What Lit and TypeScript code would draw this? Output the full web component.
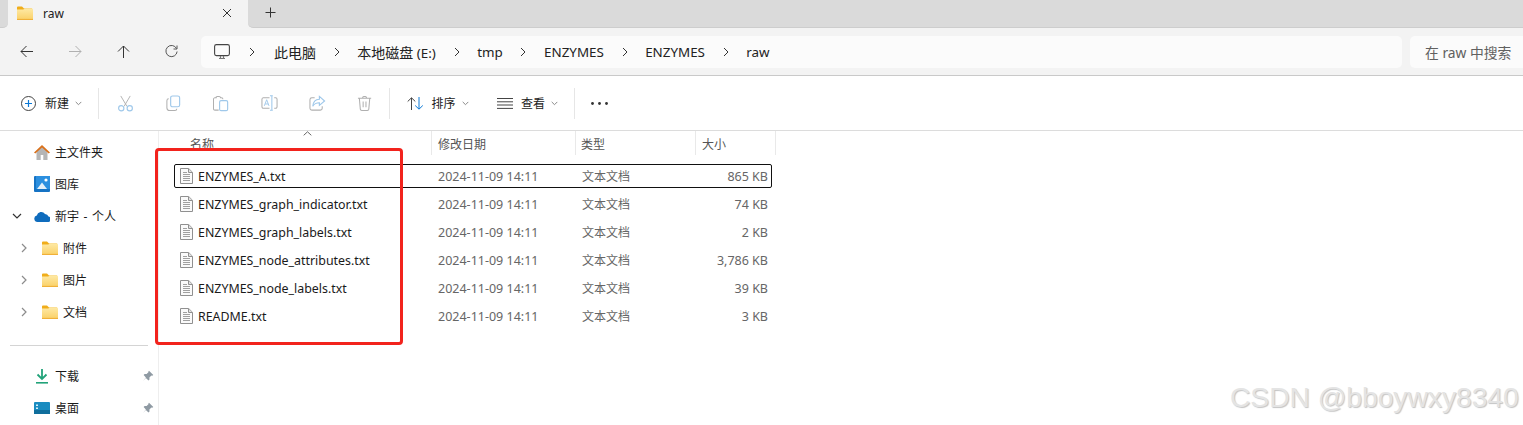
import { LitElement, html, css, svg } from "lit";
import { customElement } from "lit/decorators.js";

const folder = (w = 16, h = 14) => html`<svg width=${w} height=${h} viewBox="0 0 16 14" class="ic">
  <defs><linearGradient id="fg" x1="0" y1="0" x2="0" y2="1"><stop offset="0" stop-color="#fee9a4"/><stop offset="1" stop-color="#fad066"/></linearGradient></defs>
  <path d="M0 1.500a1 1 0 0 1 1-1h4l2 2h8v3H0z" fill="#f0ad1a"/>
  <path d="M0 3.600h6.200L8 2.600h7a1 1 0 0 1 1 1V13a1 1 0 0 1-1 1H1a1 1 0 0 1-1-1z" fill="url(#fg)"/>
  <rect x="0" y="12.900" width="16" height="1.100" fill="#f0b038"/>
</svg>`;

const chev = () => html`<svg width="6" height="10" viewBox="0 0 6 10" class="ic"><path d="M1 1l4 4-4 4" fill="none" stroke="#333" stroke-width="1"/></svg>`;
const caret = () => html`<svg class="caret" width="7" height="5" viewBox="0 0 7 5"><path d="M.7 .9l2.800 2.800L6.300 .9" fill="none" stroke="#8a8a8a" stroke-width="1"/></svg>`;
const pin = () => html`<svg class="pin" width="12" height="12" viewBox="0 0 12 12"><path d="M7 .7l4.300 4.300-1.100 .8-.8-.2-2 2 .1 2-1 1-2.600-2.700L1 11l2.900-3.600L1.600 5l1-1 2 .1 2-2-.2-.8z" fill="#8f9aa3"/></svg>`;

const fileIcon = () => html`<svg width="13" height="16" viewBox="0 0 13 16" class="ic">
  <path d="M.5 .5h8.200l3.800 3.800v11.200H.5z" fill="#fafafa" stroke="#909090"/>
  <path d="M8.500 .7v3.800h3.800" fill="#e2e2e2" stroke="#909090"/>
  <path d="M3 4.500h4M3 6.500h7M3 8.500h7M3 10.500h7M3 12.500h7" stroke="#a0a0a0" stroke-width="1"/>
</svg>`;

const B = "#9fc8ea", G = "#b0b0b0";
const toolIcons = [
  svg`<path d="M4 1l6.500 11M14 1L7.500 12" stroke="${G}" fill="none"/><circle cx="4.500" cy="14" r="2.800" stroke="${B}" stroke-width="1.200" fill="none"/><circle cx="13.500" cy="14" r="2.800" stroke="${B}" stroke-width="1.200" fill="none"/>`,
  svg`<rect x="6" y="1" width="9.500" height="11.500" rx="2" stroke="${B}" stroke-width="1.200" fill="none"/><path d="M4 4a2 2 0 0 0-2 2v7.500a3 3 0 0 0 3 3h5.500a2 2 0 0 0 2-2" stroke="${G}" stroke-width="1.100" fill="none"/>`,
  svg`<path d="M8 3.500V2.800A1.500 1.500 0 0 0 6.500 1.500h-2A1.500 1.500 0 0 0 3 2.800v.7M4 3H2a1.500 1.500 0 0 0-1.500 1.500v10A1.500 1.500 0 0 0 2 16h4M8 3h1a1.500 1.500 0 0 1 1.500 1.500" stroke="${G}" stroke-width="1.100" fill="none"/><rect x="7" y="6" width="8.500" height="10.500" rx="1.500" stroke="${B}" stroke-width="1.200" fill="none"/>`,
  svg`<path d="M9 3H2.500A1.500 1.500 0 0 0 1 4.500v8A1.500 1.500 0 0 0 2.500 14H9M14 3h1.500A1.500 1.500 0 0 1 17 4.500v8a1.500 1.500 0 0 1-1.500 1.500H14" stroke="${G}" stroke-width="1.100" fill="none"/><path d="M3.500 11.500l2.500-6.500 2.500 6.500M4.500 9.500h3" stroke="${B}" stroke-width="1" fill="none"/><path d="M9.500 .8h3M9.500 16.200h3M11.500 .8v15.400" stroke="${B}" stroke-width="1.100" fill="none"/>`,
  svg`<path d="M6 3H3a2 2 0 0 0-2 2v9a2 2 0 0 0 2 2h9a2 2 0 0 0 2-2v-2" stroke="${G}" stroke-width="1.100" fill="none"/><path d="M11 1.500l5.500 4.800L11 11V8.200c-3.500 0-5.500 1-7 3.800 .3-4.500 3-7.300 7-7.500z" stroke="${B}" stroke-width="1.200" fill="none"/>`,
  svg`<path d="M1 3.500h14M6 3.500V2.500a1.500 1.500 0 0 1 1.500-1h1A1.500 1.500 0 0 1 10 2.500v1M2.500 3.500l1 11.500a1.500 1.500 0 0 0 1.500 1.300h6a1.500 1.500 0 0 0 1.500-1.300l1-11.500M6.500 7v6M9.500 7v6" stroke="${G}" stroke-width="1.100" fill="none"/>`,
];

const files = [
  ["ENZYMES_A.txt", "865 KB"],
  ["ENZYMES_graph_indicator.txt", "74 KB"],
  ["ENZYMES_graph_labels.txt", "2 KB"],
  ["ENZYMES_node_attributes.txt", "3,786 KB"],
  ["ENZYMES_node_labels.txt", "39 KB"],
  ["README.txt", "3 KB"],
];

@customElement("app-root")
export class AppRoot extends LitElement {
  static styles = css`
    :host { display: block; position: relative; width: 1523px; height: 425px; overflow: hidden; background: #fff; font-family: "Noto Sans", "Noto Sans CJK SC", sans-serif; color: #1a1a1a; font-size: 12px; }
    * { box-sizing: border-box; }
    .ic { display: block; flex: none; }

    .strip { display: flex; height: 28px; background: #f3f3f3; }
    .strip-l { width: 8px; background: #dadada; border-bottom: 1px solid #cdcdcd; border-bottom-right-radius: 5px; }
    .tab { width: 240px; display: flex; align-items: center; padding: 0 0 2px 9px; }
    .tab-t { margin-left: 10px; flex: 1; font-size: 12px; color: #222; }
    .close { margin-right: 16px; }
    .strip-r { flex: 1; background: #dadada; border-bottom: 1px solid #cdcdcd; border-bottom-left-radius: 5px; display: flex; align-items: center; padding: 0 0 2px 17px; }

    .nav { height: 48px; background: #f3f3f3; border-bottom: 1px solid #c9c9c9; display: flex; align-items: center; padding-left: 3px; }
    .nb { width: 48px; display: flex; justify-content: center; flex: none; }
    .addr { margin-left: 6px; width: 1201px; height: 32px; background: #fbfbfb; border-radius: 5px; display: flex; align-items: center; padding-left: 13px; font-size: 13.400px; color: #222; flex: none; }
    .addr > span:not(.sep) { padding-top: 1px; white-space: pre; }
    .cjk { font-size: 14px; }
    .sep { width: 41.300px; display: flex; justify-content: center; flex: none; }
    .sep.first { width: 44px; }
    .search { margin-left: 8px; flex: 1; height: 32px; background: #fbfbfb; border-radius: 5px 0 0 5px; display: flex; align-items: center; padding: 1px 0 0 15px; font-size: 13.800px; color: #606060; white-space: nowrap; }

    .tools { height: 55px; display: flex; align-items: center; border-bottom: 1px solid #dcdcdc; padding-left: 21px; }
    .t-txt { font-size: 12px; color: #222; margin: 0 6px 0 9px; }
    .t-txt.a { margin-left: 7.500px; }
    .t-txt.b { margin-left: 8px; }
    .caret { flex: none; }
    .vsep { width: 1px; height: 31px; background: #e6e6e6; flex: none; }
    .tb { width: 48px; display: flex; justify-content: center; flex: none; }
    .grp { display: flex; align-items: center; flex: none; }
    .g-new { width: 77px; }
    .g-tools { padding-left: 2px; }
    .g-sort { padding-left: 17px; width: 96px; }
    .g-view { padding-left: 11px; width: 88px; }
    .dots { margin-left: 16px; }

    .main { display: flex; height: 294px; }
    .side { width: 159px; flex: none; border-right: 1px solid #eeeeee; padding-top: 5px; }
    .si { height: 32px; display: flex; align-items: center; padding-left: 34px; font-size: 12px; color: #1a1a1a; position: relative; }
    .si .lbl { margin-left: 5px; word-spacing: 1.500px; }
    .si.child { padding-left: 42px; }
    .si .exp { position: absolute; left: 21px; top: 11px; }
    .si .exp.open { left: 12px; top: 13px; }
    .si .pin { position: absolute; left: 142px; top: 10px; }
    .si .dl { margin: 0 2px; }
    .sdiv { height: 1px; background: #d4d4d4; margin: 17px 10px 14px; }

    .content { flex: 1; }
    .hdr { display: flex; height: 25px; position: relative; color: #555; font-size: 12px; }
    .hc { border-right: 1px solid #e9e9e9; display: flex; align-items: center; padding: 2px 0 0 5px; height: 24px; }
    .hc:nth-child(1) { width: 273px; padding-left: 31px; }
    .hc:nth-child(2) { width: 144px; padding-left: 6px; }
    .hc:nth-child(3) { width: 120px; }
    .hc:nth-child(4) { width: 80px; padding-left: 6px; }
    .up { position: absolute; left: 144px; top: 0; }
    .rows { margin: 8px 0 0 15px; width: 598px; display: grid; gap: 4px; }
    .row { height: 24px; display: grid; grid-template-columns: 263px 144px 100px 86px; align-items: center; border: 1px solid transparent; border-radius: 2px; color: #666; font-size: 12.500px; }
    .row.sel { border-color: #111; }
    .nm { display: flex; align-items: center; padding-left: 5px; color: #1a1a1a; font-size: 12.400px; }
    .nm span { margin-left: 5px; white-space: nowrap; }
    .ty { font-size: 12px; }
    .sz { text-align: right; }

    .red { position: absolute; left: 155px; top: 148px; width: 248px; height: 197px; border: 3px solid #f2231d; border-radius: 4px; pointer-events: none; }
    .wm { position: absolute; left: 1230px; top: 381px; font: 28.200px "Liberation Sans", sans-serif; color: #e4e4e4; text-shadow: 1px 1px 1px #c4c4c4; white-space: nowrap; }
  `;

  render() {
    const latin = ["tmp", "ENZYMES", "ENZYMES", "raw"];
    return html`
      <div class="strip">
        <div class="strip-l"></div>
        <div class="tab">
          ${folder()}
          <span class="tab-t">raw</span>
          <svg class="close" width="10" height="10" viewBox="0 0 10 10"><path d="M1 1l8 8M9 1l-8 8" stroke="#333" stroke-width="1"/></svg>
        </div>
        <div class="strip-r"><svg width="11" height="11" viewBox="0 0 11 11"><path d="M5.500 .5v10M.5 5.500h10" stroke="#333"/></svg></div>
      </div>

      <div class="nav">
        <div class="nb"><svg width="14" height="13" viewBox="0 0 14 13"><path d="M13 6.500H1M6.500 1L1 6.500 6.500 12" fill="none" stroke="#333"/></svg></div>
        <div class="nb"><svg width="14" height="13" viewBox="0 0 14 13"><path d="M1 6.500h12M7.500 1L13 6.500 7.500 12" fill="none" stroke="#b0b0b0"/></svg></div>
        <div class="nb"><svg width="13" height="14" viewBox="0 0 13 14"><path d="M6.500 13V1M1 6.500L6.500 1 12 6.500" fill="none" stroke="#333"/></svg></div>
        <div class="nb"><svg width="13" height="13" viewBox="0 0 13 13"><path d="M11.500 3.500A5.600 5.600 0 1 0 12.100 6.500" fill="none" stroke="#555"/><path d="M12 .5v3.500H8.500" fill="none" stroke="#555"/></svg></div>
        <div class="addr">
          <svg class="ic" width="16" height="16" viewBox="0 0 16 16"><rect x=".6" y=".6" width="14.800" height="11" rx="1.800" fill="none" stroke="#444" stroke-width="1.100"/><path d="M5 14.500h6M6.500 12v2.500M9.500 12v2.500" stroke="#777" stroke-width="1.200"/></svg>
          <span class="sep first">${chev()}</span><span class="cjk">此电脑</span>
          <span class="sep">${chev()}</span><span><span class="cjk">本地磁盘</span> (E:)</span>
          ${latin.map((c) => html`<span class="sep">${chev()}</span><span>${c}</span>`)}
        </div>
        <div class="search">在 raw 中搜索</div>
      </div>

      <div class="tools">
        <div class="grp g-new">
          <svg class="ic" width="15" height="15" viewBox="0 0 15 15"><circle cx="7.500" cy="7.500" r="7" fill="none" stroke="#444"/><path d="M7.500 4v7M4 7.500h7" stroke="#0a78d6" stroke-width="1.200"/></svg>
          <span class="t-txt">新建</span>${caret()}
        </div>
        <div class="vsep"></div>
        <div class="grp g-tools">
          ${toolIcons.map((p) => html`<div class="tb"><svg width="17" height="17" viewBox="0 0 18 18">${p}</svg></div>`)}
        </div>
        <div class="vsep"></div>
        <div class="grp g-sort">
          <svg class="ic" width="17" height="13" viewBox="0 0 17 13"><path d="M4.500 13V1M.7 4.500L4.500 .8l3.800 3.700" fill="none" stroke="#444"/><path d="M12 0v12M8.200 8.500L12 12.200l3.800-3.700" fill="none" stroke="#0a78d6"/></svg>
          <span class="t-txt a">排序</span>${caret()}
        </div>
        <div class="grp g-view">
          <svg class="ic" width="16" height="11" viewBox="0 0 16 11"><path d="M0 .5h16M0 3.800h16M0 7h16M0 10.400h16" stroke="#444"/></svg>
          <span class="t-txt b">查看</span>${caret()}
        </div>
        <div class="vsep"></div>
        <svg class="ic dots" width="17" height="3" viewBox="0 0 17 3"><circle cx="1.500" cy="1.500" r="1.400" fill="#333"/><circle cx="8.500" cy="1.500" r="1.400" fill="#333"/><circle cx="15.500" cy="1.500" r="1.400" fill="#333"/></svg>
      </div>

      <div class="main">
        <div class="side">
          <div class="si">
            <svg class="ic" width="16" height="15" viewBox="0 0 16 15"><path d="M2.500 6.500v8.500h4.200V10h2.600v5h4.200V6.500L8 1.500z" fill="#b5b5b5"/><path d="M0 7.500L8 0l8 7.500-1.300 1L8 2.400 1.300 8.500z" fill="#d9711c"/></svg>
            <span class="lbl">主文件夹</span>
          </div>
          <div class="si">
            <svg class="ic" width="16" height="16" viewBox="0 0 16 16"><rect width="16" height="16" rx="1" fill="#1673c4"/><rect x="2" y="0" width="14" height="13" fill="#2b8fdf"/><circle cx="12" cy="4" r="1.600" fill="#fff"/><path d="M3 13l5-6.500 5 6.500z" fill="#e3eff9"/></svg>
            <span class="lbl">图库</span>
          </div>
          <div class="si">
            <svg class="exp open" width="10" height="6" viewBox="0 0 10 6"><path d="M1 1l4 4 4-4" fill="none" stroke="#333" stroke-width="1.200"/></svg>
            <svg class="ic" width="16" height="11" viewBox="0 0 16 11"><path d="M3.500 11A3.300 3.300 0 0 1 2.800 4.500 4.500 4.500 0 0 1 11 3a3.800 3.800 0 0 1 3.500 2.500A2.800 2.800 0 0 1 13.500 11z" fill="#0f6cbd"/></svg>
            <span class="lbl">新宇 - 个人</span>
          </div>
          ${["附件", "图片", "文档"].map((n) => html`
            <div class="si child">
              <svg class="exp" width="6" height="10" viewBox="0 0 6 10"><path d="M1 1l4 4-4 4" fill="none" stroke="#8c8c8c" stroke-width="1.200"/></svg>
              ${folder()}<span class="lbl">${n}</span>
            </div>`)}
          <div class="sdiv"></div>
          <div class="si">
            <svg class="ic dl" width="12" height="15" viewBox="0 0 12 15"><path d="M6 0v10M1.500 5.500L6 10l4.500-4.500" fill="none" stroke="#22a37a" stroke-width="1.800"/><rect y="13" width="12" height="1.600" fill="#22a37a"/></svg>
            <span class="lbl">下载</span>${pin()}
          </div>
          <div class="si">
            <svg class="ic" width="16" height="12" viewBox="0 0 16 12"><rect width="16" height="12" rx="1" fill="#1a8cc0"/><rect y="8" width="16" height="4" fill="#0f6e9c"/><rect x="2" y="2.500" width="2" height="1.500" fill="#d8f0fa"/><rect x="2" y="5.500" width="2" height="1.500" fill="#d8f0fa"/></svg>
            <span class="lbl">桌面</span>${pin()}
          </div>
        </div>

        <div class="content">
          <div class="hdr">
            <div class="hc">名称</div><div class="hc">修改日期</div><div class="hc">类型</div><div class="hc">大小</div>
            <svg class="up" width="9" height="5" viewBox="0 0 9 5"><path d="M.7 4.300L4.500 .8l3.800 3.500" fill="none" stroke="#666"/></svg>
          </div>
          <div class="rows">
            ${files.map(([n, s], i) => html`
              <div class="row ${i === 0 ? "sel" : ""}">
                <div class="nm">${fileIcon()}<span>${n}</span></div>
                <div>2024-11-09 14:11</div>
                <div class="ty">文本文档</div>
                <div class="sz">${s}</div>
              </div>`)}
          </div>
        </div>
      </div>

      <div class="red"></div>
      <div class="wm">CSDN @bboywxy8340</div>
    `;
  }
}
